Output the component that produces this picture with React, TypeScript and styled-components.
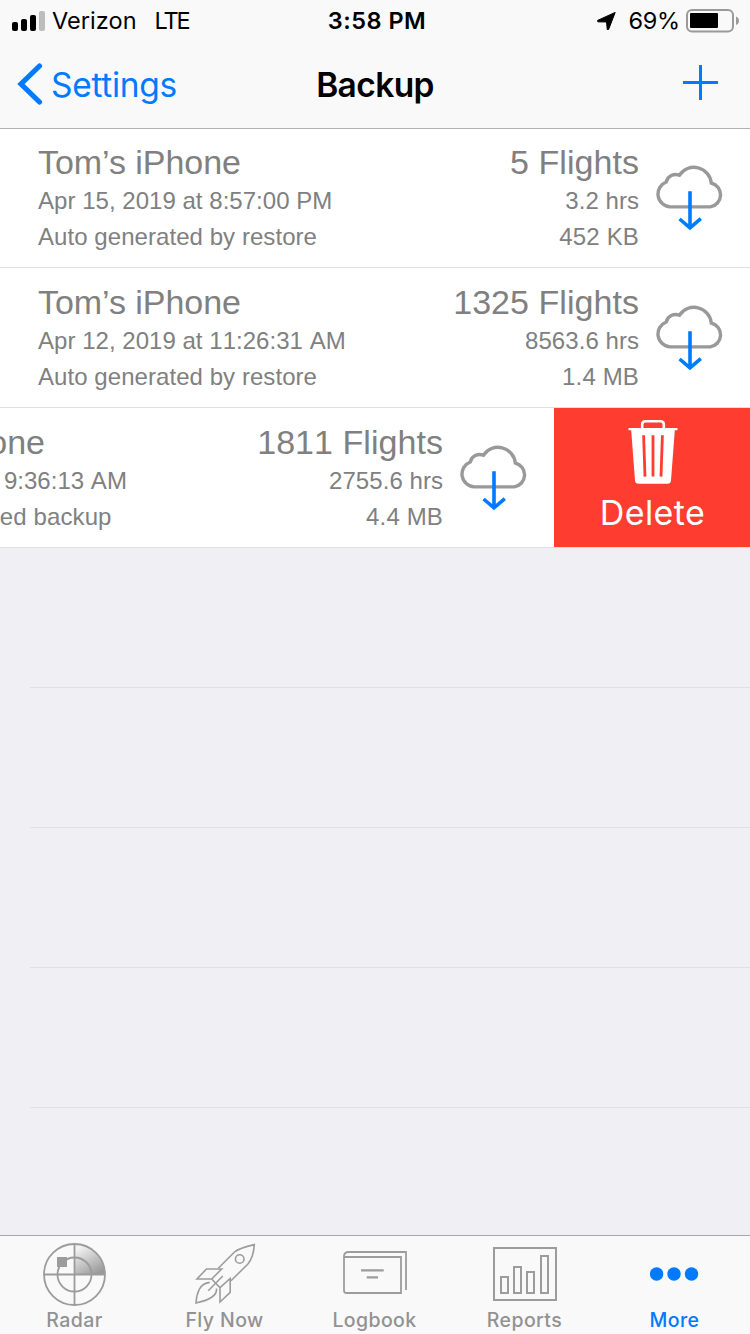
import React from "react";
import styled, { createGlobalStyle } from "styled-components";

const BLUE = "#007aff";
const SF = `Inter, "Liberation Sans", sans-serif`;
const HELV = `"Liberation Sans", Arial, sans-serif`;

const GlobalStyle = createGlobalStyle`
  * { box-sizing: border-box; }
  body { margin: 0; background: #efeff4; }
  svg { display: block; flex: none; }
`;

const Screen = styled.div`
  width: 750px;
  height: 1334px;
  display: flex;
  flex-direction: column;
  overflow: hidden;
  background: #efeff4;
  font-family: ${SF};
`;

const Header = styled.header`
  flex: none;
  height: 128px;
  background: #f9f9f9;
  box-shadow: 0 1px 0 #b2b2b2;
  z-index: 1;
`;

const StatusBar = styled.div`
  height: 40px;
  display: grid;
  grid-template-columns: 1fr auto 1fr;
  align-items: center;
  padding: 0 11px 0 12px;
`;

const StatusSide = styled.div<{ $end?: boolean }>`
  display: flex;
  align-items: center;
  justify-content: ${(p) => (p.$end ? "flex-end" : "flex-start")};
`;

const StatusText = styled.span<{ $bold?: boolean; $track?: number; $left?: number; $right?: number }>`
  font-size: 23.5px;
  line-height: 40px;
  padding-top: 1px;
  white-space: pre;
  color: #000;
  font-weight: ${(p) => (p.$bold ? 600 : 400)};
  letter-spacing: ${(p) => p.$track ?? 0}px;
  margin-left: ${(p) => p.$left ?? 0}px;
  margin-right: ${(p) => p.$right ?? 0}px;
`;

const NavBar = styled.nav`
  height: 88px;
  display: grid;
  grid-template-columns: 1fr auto 1fr;
  align-items: center;
  padding: 0 17px;
`;

const BackButton = styled.a`
  display: flex;
  align-items: center;
  gap: 8px;
  color: ${BLUE};
  font-size: 33.5px;
  letter-spacing: -0.3px;
`;

const BackLabel = styled.span`
  line-height: 40px;
  padding-top: 1px;
`;

const NavTitle = styled.h1`
  margin: 0;
  padding-top: 1px;
  font-size: 33.5px;
  line-height: 40px;
  font-weight: 600;
  letter-spacing: -0.6px;
  color: #000;
`;

const AddButton = styled.a`
  justify-self: end;
  padding: 0 15px 3px 0;
`;

const List = styled.main`
  flex: 1;
  min-height: 0;
  overflow: hidden;
`;

const Row = styled.div`
  height: 140px;
  display: flex;
  overflow: hidden;
  background: #fff;
  border-bottom: 1px solid #e0e0e2;
`;

const RowContent = styled.div<{ $shift: number }>`
  flex: none;
  width: 750px;
  margin-left: ${(p) => -p.$shift}px;
  display: flex;
  padding: 14px 25px 0 38px;
`;

const Column = styled.div<{ $right?: boolean }>`
  flex: ${(p) => (p.$right ? "none" : "1")};
  display: flex;
  flex-direction: column;
  align-items: ${(p) => (p.$right ? "flex-end" : "flex-start")};
  font-family: ${HELV};
  color: #808080;
  white-space: nowrap;
`;

const Headline = styled.div<{ $plain?: boolean }>`
  font-size: 34px;
  line-height: 41px;
  font-kerning: ${(p) => (p.$plain ? "none" : "normal")};
  letter-spacing: ${(p) => (p.$plain ? 0.05 : -0.05)}px;
`;

const Detail = styled.div<{ $track?: number }>`
  font-size: 24px;
  line-height: 36px;
  font-kerning: none;
  letter-spacing: ${(p) => p.$track ?? 0}px;
`;

const CloudSlot = styled.div`
  margin: 22px 0 0 17px;
`;

const DeleteButton = styled.div`
  flex: none;
  width: 196px;
  background: #fe3c2f;
  color: #fff;
  display: flex;
  flex-direction: column;
  align-items: center;
  padding: 12px 0 0 1px;
`;

const DeleteLabel = styled.span`
  font-size: 34px;
  line-height: 40px;
  margin-top: 8px;
  letter-spacing: 0.4px;
`;

const EmptyRow = styled.div`
  height: 140px;
  margin-left: 30px;
  border-bottom: 1px solid #e0e0e5;
`;

const TabBar = styled.footer`
  flex: none;
  height: 99px;
  display: flex;
  background: #f9f9f9;
  border-top: 1px solid #a7a7aa;
`;

const Tab = styled.div<{ $active?: boolean }>`
  width: 150px;
  display: flex;
  flex-direction: column;
  align-items: center;
  padding-top: 7px;
  color: ${(p) => (p.$active ? BLUE : "#929292")};
`;

const TabLabel = styled.span`
  font-size: 19.5px;
  line-height: 24px;
  margin: 1px 1px 0 0;
  font-weight: 500;
  letter-spacing: 0.4px;
`;

const Signal = () => (
  <svg width="33" height="20" viewBox="0 0 33 20">
    <rect x="0" y="11" width="6" height="9" rx="2" />
    <rect x="9" y="8" width="6" height="12" rx="2" />
    <rect x="18" y="4" width="6" height="16" rx="2" />
    <rect x="27" y="0" width="6" height="20" rx="2" fill="#bdbdbd" />
  </svg>
);

const Location = () => (
  <svg width="19" height="18" viewBox="0 0 19 18">
    <path d="M18.2 0.4 L11.6 17.5 L10.2 17.5 L9.6 10 L0.8 9.8 L0.6 8.4 Z" stroke="#000" strokeWidth="1" strokeLinejoin="round" />
  </svg>
);

const Battery = () => (
  <svg width="53" height="24" viewBox="0 0 53 24">
    <rect x="1" y="1" width="46" height="21.5" rx="5" fill="none" stroke="#9a9a9a" strokeWidth="2" />
    <rect x="4" y="4" width="28" height="15" rx="1" />
    <path d="M50 7.5 C52.2 8.5 53 10 53 11.8 C53 13.6 52.2 15 50 16 Z" fill="#9a9a9a" />
  </svg>
);

const Chevron = () => (
  <svg width="26" height="44" viewBox="0 0 26 44">
    <path d="M22.5 4 L4 22 L22.5 40" fill="none" stroke={BLUE} strokeWidth="5.2" strokeLinecap="round" strokeLinejoin="miter" />
  </svg>
);

const Plus = () => (
  <svg width="35" height="35" viewBox="0 0 35 35">
    <path d="M17.5 0 V35 M0 17.5 H35" stroke={BLUE} strokeWidth="3" />
  </svg>
);

const CloudDownload = () => (
  <svg width="69" height="68" viewBox="0 0 69 68" fill="none">
    <path
      d="M14.2 42.9 A12.9 12.9 0 0 1 10.2 18 A9.8 9.8 0 0 1 23.4 11.2 A17.4 17.4 0 0 1 55.3 19 A12.2 12.2 0 0 1 54.2 42.9 Z"
      stroke="#999"
      strokeWidth="3.4"
    />
    <path d="M34 27.3 V64 M23.6 55 L34 63.8 L44.8 54.6" stroke={BLUE} strokeWidth="3.6" />
  </svg>
);

const Trash = () => (
  <svg width="50" height="65" viewBox="0 0 50 65">
    <path d="M14.2 9 V4.6 Q14.2 1.3 17.5 1.3 H32.5 Q35.8 1.3 35.8 4.6 V9" fill="none" stroke="#fff" strokeWidth="2.6" />
    <path d="M0.5 8 H49.5 V10.2 H46.8 L43 60.5 Q42.7 63.8 39.5 63.8 H10.5 Q7.3 63.8 7 60.5 L3.2 10.2 H0.5 Z" fill="#fff" />
    <path d="M15.6 15.2 L17 56.6 M25 15.2 V56.6 M34.4 15.2 L33 56.6" stroke="#fe3c2f" strokeWidth="2.8" />
  </svg>
);

const TabIcon = styled.svg.attrs({ width: 64, height: 64, viewBox: "0 0 64 64" })<{ $weight?: number }>`
  fill: none;
  stroke: #9c9c9c;
  stroke-width: ${(p) => p.$weight ?? 2};
`;

const RadarIcon = () => (
  <TabIcon $weight={1.8}>
    <defs>
      <linearGradient id="sweep" x1="0.2" y1="0.1" x2="0.75" y2="1">
        <stop offset="0" stopColor="#f2f2f2" />
        <stop offset="1" stopColor="#989898" />
      </linearGradient>
    </defs>
    <path d="M31.5 31.5 V1 A30.5 30.5 0 0 1 62 31.5 Z" fill="url(#sweep)" stroke="none" />
    <circle cx="31.5" cy="31.5" r="30.5" />
    <circle cx="31.5" cy="31.5" r="17" />
    <path d="M31.5 1 V62 M1 31.5 H62" />
    <rect x="14" y="14" width="10" height="10" fill="#9c9c9c" stroke="none" />
  </TabIcon>
);

const RocketIcon = () => (
  <TabIcon $weight={1.6}>
    <path d="M25.3 25.3 L41.5 9 Q46 5.2 61.3 1.6 Q60.5 14.5 54.7 21.2 L38 37.8" />
    <path d="M28.7 26 H13.5 L4 36 H18.7 Z M18.7 36 L27 44.7" />
    <path d="M27 44.7 L37.2 35.5 V49.3 L27 59 Z" />
    <path d="M29.8 33 L15.2 47.8" />
    <path d="M16.8 39.4 Q9.5 40 6.2 46.5 Q3.4 52 3 60 Q14 57.6 19 54 Q24 50.5 23.5 45.5" />
    <circle cx="46.7" cy="16" r="4.3" />
  </TabIcon>
);

const LogbookIcon = () => (
  <TabIcon $weight={1.8}>
    <path d="M1 13 V47.5 Q1 50 3.5 50 H58 V14 H2.5 Q1 14 1 12.8 Q1.5 9 5.5 9 H63 V47" />
    <path d="M18 27.3 H40.7 M23.7 34.3 H35" strokeWidth="2.2" />
  </TabIcon>
);

const ReportsIcon = () => (
  <TabIcon>
    <rect x="1" y="5" width="62" height="52" />
    <rect x="8" y="34" width="7" height="16" />
    <rect x="21" y="24" width="7" height="26" />
    <rect x="34" y="29" width="7" height="21" />
    <rect x="48" y="13" width="7" height="37" />
  </TabIcon>
);

const MoreIcon = () => (
  <TabIcon>
    <g fill={BLUE} stroke="none">
      <circle cx="13.6" cy="31" r="6.7" />
      <circle cx="31" cy="31" r="6.7" />
      <circle cx="48.5" cy="31" r="6.7" />
    </g>
  </TabIcon>
);

type Backup = {
  date: string;
  note: string;
  noteTrack: number;
  flights: string;
  hours: string;
  size: string;
  swiped?: boolean;
};

const backups: Backup[] = [
  { date: "Apr 15, 2019 at 8:57:00 PM", note: "Auto generated by restore", noteTrack: 0.06, flights: "5 Flights", hours: "3.2 hrs", size: "452 KB" },
  { date: "Apr 12, 2019 at 11:26:31 AM", note: "Auto generated by restore", noteTrack: 0.06, flights: "1325 Flights", hours: "8563.6 hrs", size: "1.4 MB" },
  { date: "Mar 8, 2019 at 9:36:13 AM", note: "Manually created backup", noteTrack: 0.12, flights: "1811 Flights", hours: "2755.6 hrs", size: "4.4 MB", swiped: true },
];

const BackupRow = ({ date, note, noteTrack, flights, hours, size, swiped }: Backup) => (
  <Row>
    <RowContent $shift={swiped ? 196 : 0}>
      <Column>
        <Headline>Tom’s iPhone</Headline>
        <Detail $track={0.03}>{date}</Detail>
        <Detail $track={noteTrack}>{note}</Detail>
      </Column>
      <Column $right>
        <Headline $plain>{flights}</Headline>
        <Detail $track={0.05}>{hours}</Detail>
        <Detail $track={0.15}>{size}</Detail>
      </Column>
      <CloudSlot>
        <CloudDownload />
      </CloudSlot>
    </RowContent>
    {swiped && (
      <DeleteButton>
        <Trash />
        <DeleteLabel>Delete</DeleteLabel>
      </DeleteButton>
    )}
  </Row>
);

const tabs = [
  { label: "Radar", icon: <RadarIcon /> },
  { label: "Fly Now", icon: <RocketIcon /> },
  { label: "Logbook", icon: <LogbookIcon /> },
  { label: "Reports", icon: <ReportsIcon /> },
  { label: "More", icon: <MoreIcon />, active: true },
];

export default function App() {
  return (
    <>
      <GlobalStyle />
      <Screen>
        <Header>
          <StatusBar>
            <StatusSide>
              <Signal />
              <StatusText $left={7} $track={0.05}>Verizon</StatusText>
              <StatusText $left={18} $track={-2.2}>LTE</StatusText>
            </StatusSide>
            <StatusText $bold $track={0.5} $left={3}>3:58 PM</StatusText>
            <StatusSide $end>
              <Location />
              <StatusText $left={12} $right={6} $track={-0.2}>69%</StatusText>
              <Battery />
            </StatusSide>
          </StatusBar>
          <NavBar>
            <BackButton>
              <Chevron />
              <BackLabel>Settings</BackLabel>
            </BackButton>
            <NavTitle>Backup</NavTitle>
            <AddButton>
              <Plus />
            </AddButton>
          </NavBar>
        </Header>
        <List>
          {backups.map((b) => (
            <BackupRow key={b.date} {...b} />
          ))}
          {[0, 1, 2, 3].map((n) => (
            <EmptyRow key={n} />
          ))}
        </List>
        <TabBar>
          {tabs.map((t) => (
            <Tab key={t.label} $active={t.active}>
              {t.icon}
              <TabLabel>{t.label}</TabLabel>
            </Tab>
          ))}
        </TabBar>
      </Screen>
    </>
  );
}
